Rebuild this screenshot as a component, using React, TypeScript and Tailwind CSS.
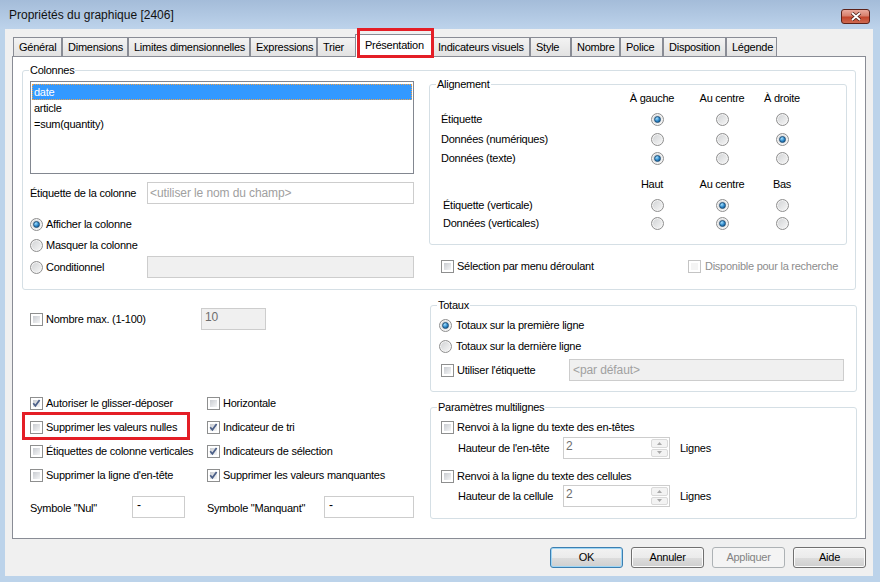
import React from "react";

function Radio({ on }: { on?: boolean }) {
  return (
    <span className="flex h-[13px] w-[13px] shrink-0 items-center justify-center rounded-full border border-[#8f8f8f] bg-linear-to-br from-[#cfd1d3] to-[#f8f8f8] shadow-[inset_0_0_0_1px_#f4f4f4]">
      {on && (
        <span className="h-[7px] w-[7px] rounded-full border border-[#1d4f78] bg-[radial-gradient(circle_at_35%_30%,#a4e0ff,#2a85c8_55%,#0d4676)]" />
      )}
    </span>
  );
}

function Check({ on, disabled }: { on?: boolean; disabled?: boolean }) {
  return (
    <span
      className={`relative flex h-[13px] w-[13px] shrink-0 border bg-white p-[2px] ${
        disabled ? "border-[#c4c4c4]" : "border-[#8e8f8f]"
      }`}
    >
      <span
        className={`flex-1 ${
          disabled ? "bg-[#f4f4f4]" : "bg-linear-to-br from-[#c9ccd1] to-[#f5f6f7]"
        }`}
      />
      {on && (
        <svg className="absolute left-0 top-0" width="11" height="11" viewBox="0 0 11 11">
          <path d="M2.2 5.2 L4.4 7.8 L8.6 2" fill="none" stroke="#4b5f88" strokeWidth="1.7" />
        </svg>
      )}
    </span>
  );
}

function Group({ title, className, children }: { title: string; className?: string; children?: React.ReactNode }) {
  return (
    <div className={`relative rounded-[3px] border border-[#d5dfe5] ${className ?? ""}`}>
      <span className="absolute -top-[7px] left-[6px] bg-white px-[1px] leading-[13px]">{title}</span>
      {children}
    </div>
  );
}

function Spin() {
  return (
    <div className="flex h-[22px] w-[107px] border border-[#cdcdcd] bg-white">
      <span className="flex-1 pl-[2px] pt-[2px] text-[12px] text-[#6d6d6d]">2</span>
      <div className="flex w-[18px] flex-col gap-[1px] py-[1px] pr-[1px]">
        <span className="flex flex-1 items-center justify-center rounded-[2px] border border-[#d9d9d9] bg-[#f3f3f3]">
          <svg width="5" height="3" viewBox="0 0 5 3">
            <path d="M0 3 L2.5 0 L5 3 Z" fill="#a9a9a9" />
          </svg>
        </span>
        <span className="flex flex-1 items-center justify-center rounded-[2px] border border-[#d9d9d9] bg-[#f3f3f3]">
          <svg width="5" height="3" viewBox="0 0 5 3">
            <path d="M0 0 L2.5 3 L5 0 Z" fill="#a9a9a9" />
          </svg>
        </span>
      </div>
    </div>
  );
}

const tabs = [
  { label: "Général", w: "w-[49px]" },
  { label: "Dimensions", w: "w-[66px]" },
  { label: "Limites dimensionnelles", w: "w-[122px]" },
  { label: "Expressions", w: "w-[67px]" },
  { label: "Trier", w: "w-[40px]" },
  { label: "Présentation", w: "w-[79px]", active: true },
  { label: "Indicateurs visuels", w: "w-[98px]" },
  { label: "Style", w: "w-[41px]" },
  { label: "Nombre", w: "w-[49px]" },
  { label: "Police", w: "w-[43px]" },
  { label: "Disposition", w: "w-[63px]" },
  { label: "Légende", w: "w-[51px]" },
];

function AlignRow({ label, sel, h, indent }: { label: string; sel: number; h: string; indent?: boolean }) {
  return (
    <div className={`flex items-center ${h}`}>
      <span className={`w-[186px] ${indent ? "pl-[2px]" : ""}`}>{label}</span>
      <span className="flex w-[60px] justify-center">
        <Radio on={sel === 0} />
      </span>
      <span className="flex w-[70px] justify-center">
        <Radio on={sel === 1} />
      </span>
      <span className="flex w-[50px] justify-center">
        <Radio on={sel === 2} />
      </span>
    </div>
  );
}

function AlignHead({ a, b, c, h }: { a: string; b: string; c: string; h: string }) {
  return (
    <div className={`flex items-center whitespace-nowrap ${h}`}>
      <span className="w-[186px]" />
      <span className="flex w-[50px] justify-center">{a}</span>
      <span className="flex w-[90px] justify-center">{b}</span>
      <span className="flex w-[30px] justify-center">{c}</span>
    </div>
  );
}

function Btn({ children, kind }: { children: React.ReactNode; kind?: "default" | "disabled" }) {
  const base = "flex h-[21px] w-[73px] items-center justify-center rounded-[3px] border";
  if (kind === "disabled")
    return <div className={`${base} border-[#adb2b5] bg-[#f4f4f4] text-[#838383]`}>{children}</div>;
  return (
    <div
      className={`${base} bg-[linear-gradient(#f2f2f2_0%,#ebebeb_50%,#dddddd_50%,#cfcfcf_100%)] ${
        kind === "default"
          ? "border-[#3c7fb1] shadow-[inset_0_0_0_1px_#9fd6f5]"
          : "border-[#707070] shadow-[inset_0_0_0_1px_#fbfbfb]"
      }`}
    >
      {children}
    </div>
  );
}

export default function App() {
  return (
    <div className="relative flex h-[582px] w-[880px] flex-col overflow-hidden bg-[#bcd3ea] font-['Liberation_Sans',Arial,sans-serif] text-[11px] leading-[13px] tracking-[-0.25px] text-black">
      {/* title bar */}
      <div className="flex h-[29px] shrink-0 items-start bg-linear-to-b from-[#a4bcd9] to-[#bdd3eb]">
        <span className="mt-[8px] pl-[9px] text-[12px] leading-[14px] tracking-normal text-[#111]">
          Propriétés du graphique [2406]
        </span>
        <div className="ml-auto mr-[10px] mt-[9px] flex h-[15px] w-[29px] items-center justify-center rounded-[3px] border border-[#5d2219] bg-[linear-gradient(#e9a99c,#d7806d_45%,#c2452c_55%,#cf6a50)]">
          <svg width="12" height="9" viewBox="0 0 12 9">
            <path d="M2 1 L10 8 M10 1 L2 8" stroke="#4a1d16" strokeWidth="3.4" />
            <path d="M2 1 L10 8 M10 1 L2 8" stroke="#ffffff" strokeWidth="1.8" />
          </svg>
        </div>
      </div>

      {/* client */}
      <div className="ml-[5px] mr-[7px] flex h-[547px] flex-col bg-[#f0f0f0]">
        {/* tabs */}
        <div className="mt-[5px] flex h-[22px] items-end pl-[8px]">
          {tabs.map((t) =>
            t.active ? (
              <div
                key={t.label}
                className={`relative z-10 -mx-[2px] -mb-[1px] flex h-[23px] items-center border border-b-0 border-[#898c95] bg-white pb-[2px] pl-[9px] ${t.w}`}
              >
                {t.label}
              </div>
            ) : (
              <div
                key={t.label}
                className={`flex h-[19px] items-center border border-b-0 border-[#898c95] bg-linear-to-b from-[#f3f3f3] to-[#e2e2e2] pl-[5px] whitespace-nowrap ${t.w}`}
              >
                {t.label}
              </div>
            )
          )}
        </div>

        {/* panel */}
        <div className="ml-[7px] flex h-[483px] w-[854px] flex-col border border-[#898c95] bg-white">
          <Group title="Colonnes" className="ml-[9px] mt-[13px] flex h-[220px] w-[834px] items-start pl-[7px] pt-[10px]">
            <div className="flex w-[384px] flex-col">
              <div className="flex h-[93px] flex-col border border-[#828790] p-[1px]">
                <div className="mt-[1px] flex h-[16px] items-center border border-dotted border-[#f0a24a] bg-[#3399ff] pl-[1px] text-white">
                  date
                </div>
                <div className="flex h-[16px] items-center pl-[2px]">article</div>
                <div className="flex h-[16px] items-center pl-[2px]">=sum(quantity)</div>
              </div>
              <div className="mt-[8px] flex h-[22px] items-center">
                <span className="w-[117px]">Étiquette de la colonne</span>
                <div className="flex h-[22px] w-[267px] items-center border border-[#cdcdcd] pl-[2px] text-[12px] tracking-[-0.1px] text-[#a0a0a0]">
                  &lt;utiliser le nom du champ&gt;
                </div>
              </div>
              <div className="mt-[10px] flex h-[21px] items-center gap-[3px]">
                <Radio on />
                <span>Afficher la colonne</span>
              </div>
              <div className="flex h-[21px] items-center gap-[3px]">
                <Radio />
                <span>Masquer la colonne</span>
              </div>
              <div className="flex h-[22px] items-center">
                <Radio />
                <span className="ml-[3px] w-[101px]">Conditionnel</span>
                <div className="h-[22px] w-[267px] border border-[#cdcdcd] bg-[#f0f0f0]" />
              </div>
            </div>

            <div className="ml-[15px] flex w-[418px] flex-col">
              <Group title="Alignement" className="mt-[3px] flex h-[161px] flex-col pl-[11px]">
                <AlignHead a="À gauche" b="Au centre" c="À droite" h="mt-[3px] h-[20px]" />
                <div className="mt-[1px]">
                  <AlignRow label="Étiquette" sel={0} h="h-[20px]" />
                  <AlignRow label="Données (numériques)" sel={2} h="h-[20px]" />
                  <AlignRow label="Données (texte)" sel={0} h="h-[18px]" />
                </div>
                <AlignHead a="Haut" b="Au centre" c="Bas" h="mt-[8px] h-[18px]" />
                <div className="mt-[3px]">
                  <AlignRow label="Étiquette (verticale)" sel={1} h="h-[18px]" indent />
                  <AlignRow label="Données (verticales)" sel={1} h="h-[18px]" indent />
                </div>
              </Group>
              <div className="mt-[11px] flex h-[21px] items-center pl-[12px] pr-[9px]">
                <Check />
                <span className="ml-[3px]">Sélection par menu déroulant</span>
                <span className="ml-auto flex items-center">
                  <Check disabled />
                  <span className="ml-[4px] text-[#8d8d8d]">Disponible pour la recherche</span>
                </span>
              </div>
            </div>
          </Group>

          <div className="flex">
            {/* left bottom */}
            <div className="flex w-[417px] flex-col pl-[17px]">
              <div className="mt-[18px] flex h-[22px] items-center">
                <Check />
                <span className="ml-[3px] w-[155px]">Nombre max. (1-100)</span>
                <div className="flex h-[22px] w-[65px] items-start border border-[#cdcdcd] bg-[#f0f0f0] pl-[3px] pt-[2px] text-[12px] text-[#6d6d6d]">
                  10
                </div>
              </div>
              <div className="mt-[61px] grid grid-cols-[177px_1fr] auto-rows-[24px]">
                {[
                  ["Autoriser le glisser-déposer", true, "Horizontale", false],
                  ["Supprimer les valeurs nulles", false, "Indicateur de tri", true],
                  ["Étiquettes de colonne verticales", false, "Indicateurs de sélection", true],
                  ["Supprimer la ligne d'en-tête", false, "Supprimer les valeurs manquantes", true],
                ].map(([a, ac, b, bc]) => (
                  <React.Fragment key={a as string}>
                    <div className="flex items-center gap-[3px] whitespace-nowrap">
                      <Check on={ac as boolean} />
                      <span>{a as string}</span>
                    </div>
                    <div className="flex items-center gap-[3px] whitespace-nowrap">
                      <Check on={bc as boolean} />
                      <span>{b as string}</span>
                    </div>
                  </React.Fragment>
                ))}
              </div>
              <div className="mt-[9px] flex h-[22px] items-center">
                <span className="mt-[3px] w-[102px]">Symbole "Nul"</span>
                <div className="h-[22px] w-[53px] border border-[#cdcdcd] pl-[4px] pt-[2px] text-[12px]">-</div>
                <span className="ml-[22px] mt-[3px] w-[117px]">Symbole "Manquant"</span>
                <div className="h-[22px] w-[90px] border border-[#cdcdcd] pl-[4px] pt-[2px] text-[12px]">-</div>
              </div>
            </div>

            {/* right bottom */}
            <div className="flex w-[427px] flex-col">
              <Group title="Totaux" className="mt-[15px] flex h-[87px] flex-col">
                <div className="mt-[9px] flex h-[21px] items-center pl-[8px]">
                  <Radio on />
                  <span className="ml-[4px]">Totaux sur la première ligne</span>
                </div>
                <div className="flex h-[21px] items-center pl-[8px]">
                  <Radio />
                  <span className="ml-[4px]">Totaux sur la dernière ligne</span>
                </div>
                <div className="mt-[2px] flex h-[22px] items-center pl-[10px]">
                  <Check />
                  <span className="ml-[3px] w-[112px]">Utiliser l'étiquette</span>
                  <div className="flex h-[22px] w-[275px] items-center border border-[#cdcdcd] bg-[#f0f0f0] pl-[3px] text-[12px] tracking-[-0.1px] text-[#a0a0a0]">
                    &lt;par défaut&gt;
                  </div>
                </div>
              </Group>
              <Group title="Paramètres multilignes" className="mt-[15px] flex h-[112px] flex-col">
                <div className="mt-[9px] flex h-[20px] items-center pl-[10px]">
                  <Check />
                  <span className="ml-[3px]">Renvoi à la ligne du texte des en-têtes</span>
                </div>
                <div className="flex h-[22px] items-center pl-[27px]">
                  <span className="w-[105px]">Hauteur de l'en-tête</span>
                  <Spin />
                  <span className="ml-[10px]">Lignes</span>
                </div>
                <div className="mt-[8px] flex h-[18px] items-center pl-[10px]">
                  <Check />
                  <span className="ml-[3px]">Renvoi à la ligne du texte des cellules</span>
                </div>
                <div className="flex h-[22px] items-center pl-[27px]">
                  <span className="w-[105px]">Hauteur de la cellule</span>
                  <Spin />
                  <span className="ml-[10px]">Lignes</span>
                </div>
              </Group>
            </div>
          </div>
        </div>

        {/* buttons */}
        <div className="mt-[8px] flex justify-end gap-[8px] pr-[7px]">
          <Btn kind="default">OK</Btn>
          <Btn>Annuler</Btn>
          <Btn kind="disabled">Appliquer</Btn>
          <Btn>Aide</Btn>
        </div>
      </div>

      {/* annotation boxes */}
      <div className="pointer-events-none absolute left-[357px] top-[28px] z-20 h-[30px] w-[77px] border-[3px] border-[#e41e26]" />
      <div className="pointer-events-none absolute left-[22px] top-[412px] z-20 h-[28px] w-[168px] border-[3px] border-[#e41e26]" />
    </div>
  );
}
